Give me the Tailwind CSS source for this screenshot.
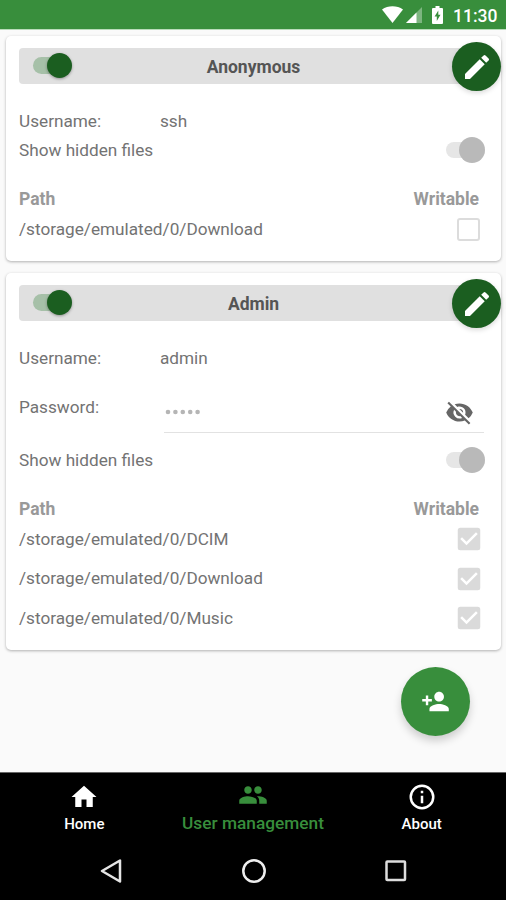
<!DOCTYPE html>
<html lang="en">
<head>
<meta charset="utf-8">
<meta name="viewport" content="width=device-width, initial-scale=1">
<title>User management</title>
<script src="https://cdn.jsdelivr.net/npm/@tailwindcss/browser@4"></script>
</head>
<body class="bg-[#fafafa]">
<svg class="hidden">
  <symbol id="pencil" viewBox="0 0 24 24"><path d="M3 17.25V21h3.75L17.81 9.94l-3.75-3.75L3 17.25zM20.71 7.04a1 1 0 0 0 0-1.41l-2.34-2.34a1 1 0 0 0-1.41 0l-1.83 1.83 3.75 3.75 1.83-1.83z"/></symbol>
  <symbol id="checked" viewBox="0 0 24 24"><path d="M19 3H5a2 2 0 0 0-2 2v14a2 2 0 0 0 2 2h14a2 2 0 0 0 2-2V5a2 2 0 0 0-2-2zm-9 14-5-5 1.410-1.410L10 14.170l7.590-7.590L19 8l-9 9z"/></symbol>
</svg>
<div class="flex h-[900px] w-[506px] flex-col overflow-hidden font-['Roboto','Noto_Sans',sans-serif] text-[17.2px] text-[#737373]">
  <header class="flex h-[30px] shrink-0 items-center justify-end border-b border-[#b9dcba] bg-[#388e3c] pr-[9px] text-white">
    <svg class="h-[17px] w-[21px]" viewBox="0 0 21 17"><path fill="#fff" d="M0 3.500C6-.8 15-.8 21 3.500L10.500 17z"/></svg>
    <svg class="ml-[3px] h-[16px] w-[16px]" viewBox="0 0 16 16"><path fill="#fff" fill-opacity=".35" d="M16 0v16H0z"/><path fill="#fff" d="M10.500 5.500V16H0z"/></svg>
    <svg class="ml-[10px] mr-[1px] h-[18px] w-[11px]" viewBox="0 0 11 18"><path fill="#fff" fill-rule="evenodd" d="M3.500 0h4v2H10q1 0 1 1v14q0 1-1 1H1q-1 0-1-1V3q0-1 1-1h2.500zM6.300 4.500 2.600 10.500h2.200v4.500l3.700-6.300H6.300z"/></svg>
    <span class="ml-[9px] mt-[2px] w-[44px] whitespace-nowrap text-[17.500px] font-medium leading-[20px]">11:30</span>
  </header>

  <main class="flex h-[742px] shrink-0 flex-col gap-[12px] pl-[6px] pr-[5px] pt-[6px]">
    <section class="relative h-[225px] shrink-0 rounded-[5px] bg-white px-[13px] pt-[12px] shadow-[0_1px_3px_rgba(0,0,0,0.3)]">
      <div class="relative flex h-[36px] items-center justify-center rounded-[4px] bg-[#e0e0e0] text-[17.500px] font-bold text-[#555]">
        <span class="pt-[3px]">Anonymous</span>
        <div class="absolute left-[14px] top-[9px] h-[17px] w-[36px] rounded-full bg-[#a6c0a8]"></div>
        <div class="absolute left-[28px] top-[4.500px] size-[25px] rounded-full bg-[#1b5e20] shadow-[0_1px_3px_rgba(0,0,0,0.35)]"></div>
      </div>
      <button class="absolute right-[0.500px] top-[6px] flex size-[49px] items-center justify-center rounded-full bg-[#1b5e20] shadow-[0_2px_5px_rgba(0,0,0,0.15)]"><svg class="size-[33px] fill-white pl-[1px] pt-[1px]"><use href="#pencil"/></svg></button>
      <div class="mt-[23px] flex h-[29px] items-center pt-[1px]"><span class="w-[141px]">Username:</span><span>ssh</span></div>
      <div class="flex h-[29px] items-center justify-between"><span>Show hidden files</span>
        <div class="mr-[3px] mt-[-1px] flex h-[16px] w-[39px] items-center justify-end rounded-full bg-[#e6e6e6]"><div class="size-[26px] shrink-0 rounded-full bg-[#b9b9b9]"></div></div></div>
      <div class="mt-[21px] flex h-[24px] items-center justify-between pt-[2px] text-[17.500px] font-bold text-[#999]"><span>Path</span><span class="mr-[9px]">Writable</span></div>
      <div class="flex h-[39.500px] items-center justify-between"><span>/storage/emulated/0/Download</span><div class="mr-[8px] mt-[-1px] size-[23px] rounded-[3px] border-2 border-[#dcdcdc]"></div></div>
    </section>

    <section class="relative h-[377px] shrink-0 rounded-[5px] bg-white px-[13px] pt-[12px] shadow-[0_1px_3px_rgba(0,0,0,0.3)]">
      <div class="relative flex h-[36px] items-center justify-center rounded-[4px] bg-[#e0e0e0] text-[17.500px] font-bold text-[#555]">
        <span class="pt-[3px]">Admin</span>
        <div class="absolute left-[14px] top-[9px] h-[17px] w-[36px] rounded-full bg-[#a6c0a8]"></div>
        <div class="absolute left-[28px] top-[4.500px] size-[25px] rounded-full bg-[#1b5e20] shadow-[0_1px_3px_rgba(0,0,0,0.35)]"></div>
      </div>
      <button class="absolute right-[0.500px] top-[6px] flex size-[49px] items-center justify-center rounded-full bg-[#1b5e20] shadow-[0_2px_5px_rgba(0,0,0,0.15)]"><svg class="size-[33px] fill-white pl-[1px] pt-[1px]"><use href="#pencil"/></svg></button>
      <div class="mt-[23px] flex h-[29px] items-center pt-[1px]"><span class="w-[141px]">Username:</span><span>admin</span></div>
      <div class="mt-[19px] flex h-[41px]">
        <span class="w-[145px] pt-[3px]">Password:</span>
        <div class="mr-[4px] flex flex-1 items-center justify-between border-b-[1.500px] border-[#e2e2e2]">
          <svg class="h-[6px] w-[40px] fill-[#b5b5b5]" viewBox="0 0 40 6"><circle cx="4" cy="3" r="2.300"/><circle cx="11.400" cy="3" r="2.300"/><circle cx="18.800" cy="3" r="2.300"/><circle cx="26.200" cy="3" r="2.300"/><circle cx="33.600" cy="3" r="2.300"/></svg>
          <svg class="mr-[10px] size-[29px] fill-[#666]" viewBox="0 0 24 24"><path d="M12 7a5 5 0 0 1 4.640 6.830l2.920 2.920A11.800 11.800 0 0 0 22.990 12C21.260 7.610 16.990 4.500 12 4.500c-1.400 0-2.740.25-3.980.7l2.160 2.160C10.740 7.130 11.350 7 12 7zM2 4.270l2.740 2.740A11.800 11.800 0 0 0 1 12c1.730 4.390 6 7.500 11 7.500 1.550 0 3.030-.3 4.380-.84L19.730 22 21 20.730 3.270 3 2 4.270zM7.530 9.800l1.550 1.550A3 3 0 0 0 12 15c.22 0 .44-.03.65-.08l1.550 1.550A5 5 0 0 1 7.530 9.800zm4.310-.78 3.150 3.150.02-.16a3 3 0 0 0-3-3l-.17.01z"/></svg>
        </div>
      </div>
      <div class="mt-[12px] flex h-[30px] items-center justify-between"><span class="pt-[1px]">Show hidden files</span>
        <div class="mr-[3px] flex h-[16px] w-[39px] items-center justify-end rounded-full bg-[#e6e6e6]"><div class="size-[26px] shrink-0 rounded-full bg-[#b9b9b9]"></div></div></div>
      <div class="mt-[21px] flex h-[24px] items-center justify-between pt-[2px] text-[17.500px] font-bold text-[#999]"><span>Path</span><span class="mr-[9px]">Writable</span></div>
      <div class="flex h-[39.500px] items-center justify-between"><span>/storage/emulated/0/DCIM</span><svg class="mr-[4px] mt-[-1px] size-[30px] fill-[#dadada]"><use href="#checked"/></svg></div>
      <div class="flex h-[39.500px] items-center justify-between"><span>/storage/emulated/0/Download</span><svg class="mr-[4px] mt-[-1px] size-[30px] fill-[#dadada]"><use href="#checked"/></svg></div>
      <div class="flex h-[39.500px] items-center justify-between"><span>/storage/emulated/0/Music</span><svg class="mr-[4px] mt-[-1px] size-[30px] fill-[#dadada]"><use href="#checked"/></svg></div>
    </section>

    <button class="mr-[31px] mt-[4.500px] flex size-[69px] shrink-0 items-center justify-center self-end rounded-full bg-[#388e3c] shadow-[0_5px_9px_rgba(0,0,0,0.18)]">
      <svg class="size-[29px] fill-white" viewBox="0 0 24 24"><path d="M15 12c2.210 0 4-1.790 4-4s-1.790-4-4-4-4 1.790-4 4 1.790 4 4 4zm-9-2V7H4v3H1v2h3v3h2v-3h3v-2H6zm9 4c-2.670 0-8 1.340-8 4v2h16v-2c0-2.660-5.330-4-8-4z"/></svg>
    </button>
  </main>

  <footer class="h-[128px] shrink-0 border-t border-[#666] bg-black text-white">
    <nav class="grid h-[69px] grid-cols-3 pt-[9px] text-center">
      <div class="flex flex-col items-center"><svg class="size-[30px] fill-white" viewBox="0 0 24 24"><path d="M10 20v-6h4v6h5v-8h3L12 3 2 12h3v8z"/></svg><span class="text-[15px] font-medium leading-[25px]">Home</span></div>
      <div class="flex flex-col items-center text-[#388e3c]"><svg class="mt-[-2px] size-[30px] fill-[#388e3c]" viewBox="0 0 24 24"><path d="M16 11c1.660 0 2.990-1.340 2.990-3S17.660 5 16 5s-3 1.340-3 3 1.340 3 3 3zm-8 0c1.660 0 2.990-1.340 2.990-3S9.660 5 8 5 5 6.340 5 8s1.340 3 3 3zm0 2c-2.330 0-7 1.170-7 3.500V19h14v-2.500c0-2.330-4.670-3.500-7-3.500zm8 0c-.29 0-.62.020-.97.050 1.160.84 1.970 1.970 1.970 3.450V19h6v-2.500c0-2.330-4.670-3.500-7-3.500z"/></svg><span class="text-[17.300px] font-medium leading-[27px]">User management</span></div>
      <div class="flex flex-col items-center"><svg class="size-[30px] fill-white" viewBox="0 0 24 24"><path d="M11 17h2v-6h-2v6zm1-15a10 10 0 1 0 0 20 10 10 0 0 0 0-20zm0 18a8 8 0 1 1 0-16 8 8 0 0 1 0 16zM11 9h2V7h-2v2z"/></svg><span class="text-[15px] font-medium leading-[25px]">About</span></div>
    </nav>
    <div class="flex h-[58px] items-center justify-between pl-[99px] pr-[98px]">
      <svg class="size-[24px] fill-none stroke-[#e5e5e5] stroke-[2.500]" viewBox="0 0 24 24" stroke-linejoin="round"><path d="M21 1.500v21L3 12z"/></svg>
      <svg class="size-[26px] fill-none stroke-[#eee] stroke-[2.500]" viewBox="0 0 26 26"><circle cx="13" cy="13" r="10.700"/></svg>
      <svg class="size-[24px] fill-none stroke-[#ddd] stroke-[2.500]" viewBox="0 0 24 24"><rect x="2.500" y="2.500" width="18.500" height="18.500" rx=".8"/></svg>
    </div>
  </footer>
</div>
</body>
</html>
